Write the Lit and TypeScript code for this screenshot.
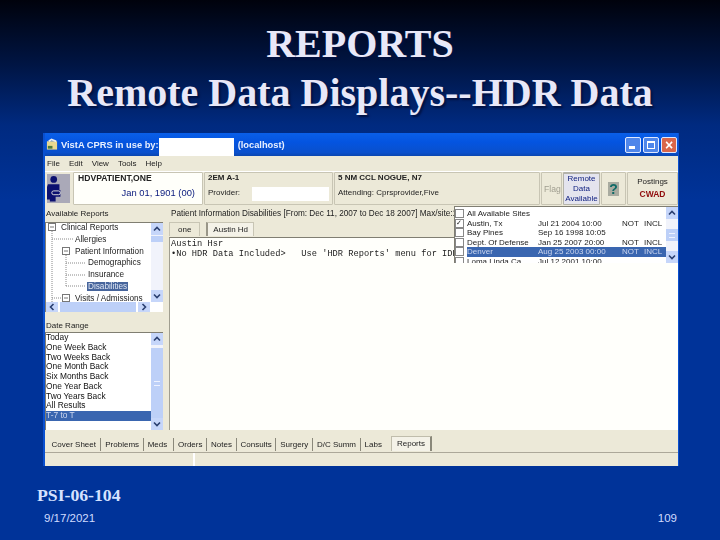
import { LitElement, html, css } from 'lit';
import { customElement } from 'lit/decorators.js';

const TREE = [
  { label: 'Clinical Reports', x: 14 },
  { label: 'Allergies', x: 28 },
  { label: 'Patient Information', x: 28 },
  { label: 'Demographics', x: 41 },
  { label: 'Insurance', x: 41 },
  { label: 'Disabilities', x: 41, sel: true },
  { label: 'Visits / Admissions', x: 28 },
];

const RANGES = ['Today', 'One Week Back', 'Two Weeks Back', 'One Month Back', 'Six Months Back', 'One Year Back', 'Two Years Back', 'All Results', 'T-7 to T'];

const SITES = [
  { name: 'All Available Sites', date: '', a: '', b: '' },
  { name: 'Austin, Tx', date: 'Jul 21 2004 10:00', a: 'NOT', b: 'INCL', on: true },
  { name: 'Bay Pines', date: 'Sep 16 1998 10:05', a: '', b: '' },
  { name: 'Dept. Of Defense', date: 'Jan 25 2007 20:00', a: 'NOT', b: 'INCL' },
  { name: 'Denver', date: 'Aug 25 2003 00:00', a: 'NOT', b: 'INCL', sel: true },
  { name: 'Loma Linda Ca', date: 'Jul 12 2001 10:00', a: '', b: '' },
];

const TABS = ['Cover Sheet', 'Problems', 'Meds', 'Orders', 'Notes', 'Consults', 'Surgery', 'D/C Summ', 'Labs'];

const UP = html`<svg width="12" height="12" viewBox="0 0 12 12"><path d="M3 7.5l3-3 3 3" fill="none" stroke="#2a3f70" stroke-width="1.6" /></svg>`;
const DOWN = html`<svg width="12" height="12" viewBox="0 0 12 12"><path d="M3 4.5l3 3 3-3" fill="none" stroke="#2a3f70" stroke-width="1.6" /></svg>`;
const LEFT = html`<svg width="12" height="10" viewBox="0 0 12 10"><path d="M7.5 2l-3 3 3 3" fill="none" stroke="#2a3f70" stroke-width="1.6" /></svg>`;
const RIGHT = html`<svg width="12" height="10" viewBox="0 0 12 10"><path d="M4.5 2l3 3-3 3" fill="none" stroke="#2a3f70" stroke-width="1.6" /></svg>`;

@customElement('app-root')
export class AppRoot extends LitElement {
  static styles = css`
    :host {
      display: flex;
      flex-direction: column;
      width: 720px;
      height: 540px;
      overflow: hidden;
      background: linear-gradient(#00020c 0, #001544 65px, #002a80 125px, #003399 200px, #003399 100%);
      font-family: "Liberation Sans", Arial, sans-serif;
    }
    h1 {
      margin: 0;
      padding-top: 19px;
      height: 114px;
      box-sizing: border-box;
      text-align: center;
      font: bold 40px/49px "Liberation Serif", serif;
      color: #e8e8f8;
      text-shadow: 2px 2px 2px #001040;
    }
    .win {
      position: relative;
      margin: 19px 41px 0 43px;
      height: 333px;
      display: flex;
      flex-direction: column;
      background: #ece9d8;
      border-left: 2px solid #0a50d0;
      border-right: 1px solid #0a50d0;
      font-size: 8px;
      color: #222;
      filter: blur(0.35px);
    }
    .title {
      height: 23px;
      flex: none;
      display: flex;
      align-items: center;
      background: linear-gradient(#0a5fe8, #0454e0 40%, #0a50cc 85%, #0a46b0);
      color: #e8f0ff;
      font-weight: bold;
      font-size: 9.3px;
    }
    .title svg { margin: 0 3px 0 1px; }
    .blank { width: 75px; height: 18px; background: #fff; margin: 5px 4px 0 0; align-self: flex-start; }
    .btns { margin-left: auto; display: flex; gap: 2px; padding-right: 1px; }
    .btn {
      width: 16px;
      height: 16px;
      box-sizing: border-box;
      border: 1px solid #dfe8ff;
      border-radius: 2px;
      background: #4f86ea;
      position: relative;
    }
    .btn.min::after { content: ''; position: absolute; left: 3px; bottom: 3px; width: 6px; height: 3px; background: #fff; }
    .btn.max::after { content: ''; position: absolute; inset: 3px; border: 1px solid #fff; border-top-width: 2px; }
    .btn.close { background: #d9664a; color: #fff; font: bold 14px/14px "Liberation Sans", sans-serif; text-align: center; }
    .menu {
      height: 16px;
      flex: none;
      display: flex;
      gap: 9px;
      align-items: center;
      padding-left: 2px;
      border-bottom: 1px solid #fff;
      box-sizing: border-box;
    }
    .head {
      height: 33px;
      flex: none;
      display: grid;
      grid-template-columns: 27px 130px 129px 206px 21px 37px 25px 51px;
      gap: 1px;
      box-sizing: border-box;
    }
    .cell {
      border: 1px solid #c8c5b4;
      border-radius: 1px;
      padding: 0 3px;
      line-height: 10px;
      min-width: 0;
      overflow: hidden;
      white-space: nowrap;
    }
    .l2 { margin-top: 5px; display: flex; }
    .strong { font-weight: bold; }
    .pic { background: #aaa9b8; border: 2px solid #ece9d8; padding: 0; }
    .pt { background: #fffffa; font-weight: bold; font-size: 8.6px; padding-left: 4px; }
    .pt .l2 { display: block; font-weight: normal; color: #102080; font-size: 9.4px; text-align: right; padding-right: 4px; }
    .prov { display: block; width: 82px; height: 14px; background: #fff; margin: -1px 0 0 12px; }
    .flag { color: #a09e90; display: flex; align-items: center; padding: 0 0 0 2px; font-size: 8.6px; }
    .remote { background: #e4e4ee; color: #102080; text-align: center; padding: 0; line-height: 9.8px; white-space: normal; border: 1px solid #b4b3aa; border-top-width: 2px; }
    .help { display: flex; align-items: center; justify-content: center; padding: 0; }
    .help b { background: #a9aba0; color: #0f6a66; font: bold 14px/14px "Liberation Sans", sans-serif; width: 11px; text-align: center; }
    .post { text-align: center; padding-top: 2px; line-height: 13px; }
    .post b { color: #900c0c; display: block; font-size: 8.5px; }
    .body { flex: 1; display: flex; min-height: 0; }
    .left { width: 124px; flex: none; display: flex; flex-direction: column; }
    .lbl { height: 13px; line-height: 13px; padding-left: 1px; flex: none; margin-top: 2px; }
    .box {
      position: relative;
      display: flex;
      width: 118px;
      background: #fff;
      border-top: 1px solid #807e72;
      border-left: 1px solid #807e72;
      box-sizing: border-box;
      overflow: hidden;
    }
    .tree { height: 90px; margin-top: 2px; flex-wrap: wrap; }
    .rows { flex: 1; min-width: 0; overflow: hidden; height: 79px; box-sizing: border-box; }
    .rows .node:first-child { margin-top: -1px; }
    .node { height: 11.8px; line-height: 11px; white-space: nowrap; font-size: 8.2px; }
    .node span { padding: 0 1px; }
    .node .sel { background: #47659c; color: #dfe6f4; }
    .lines { position: absolute; left: 0; top: 0; pointer-events: none; }
    .sb { width: 12px; flex: none; display: flex; flex-direction: column; background: #f1f3fb; }
    .sb u { display: block; flex: none; height: 12px; background: #c6d6fa; }
    .sb svg, .hb svg { display: block; }
    .sb s { display: block; position: relative; background: #bdd0f8; margin: auto 0; height: 12px; }
    .sb s::after { content: ''; position: absolute; left: 3px; right: 3px; top: 50%; height: 3px; margin-top: -2px; border-top: 1px solid #eef2ff; border-bottom: 1px solid #eef2ff; }
    .sb.tr s { margin: 1px 0 auto; height: 6px; }
    .sb.tr s::after { display: none; }
    .sb.full s { margin: 3px 0 0; flex: 1; height: auto; }
    .hb { width: 100%; height: 10px; display: flex; padding-right: 13px; box-sizing: border-box; }
    .hb u { display: block; width: 12px; height: 10px; background: #c6d6fa; flex: none; }
    .hb s { display: block; flex: 1; margin: 0 2px; background: #bdd0f8; }
    .range { height: 98px; }
    .items { flex: 1; min-width: 0; }
    .item { height: 9.75px; line-height: 9.75px; font-size: 8.4px; white-space: nowrap; color: #111; }
    .item.sel { background: #3a66b0; color: #ccd6ee; }
    .right { flex: 1; min-width: 0; display: flex; flex-direction: column; }
    .rlbl { height: 14px; line-height: 14px; margin-top: 2px; padding-left: 2px; white-space: nowrap; flex: none; font-size: 8.2px; overflow: hidden; }
    .stabs { height: 16px; flex: none; display: flex; gap: 6px; }
    .stab { padding: 0 8px; border: 1px solid #c8c5b4; border-bottom: 0; line-height: 13px; height: 13px; margin-top: 1px; }
    .stab.on { padding: 0 5px; border-left: 2px solid #999688; background: #f4f2e8; }
    .memo {
      flex: 1;
      background: #fffffb;
      border-top: 1px solid #807e72;
      border-left: 1px solid #a09e90;
      font: 8.7px/10px "Liberation Mono", monospace;
      padding: 1px 1px;
      white-space: pre;
      overflow: hidden;
      margin-bottom: 6px;
      color: #222;
    }
    .sites {
      position: absolute;
      left: 409px;
      top: 73px;
      width: 224px;
      height: 57px;
      background: #fff;
      border: 1px solid #807e72;
      border-right: 0;
      border-bottom: 0;
      box-sizing: border-box;
      display: flex;
      overflow: hidden;
    }
    .slist { flex: 1; min-width: 0; padding-top: 2px; }
    .site { display: grid; grid-template-columns: 12px 71px 84px 22px 1fr; height: 9.5px; line-height: 9.5px; white-space: nowrap; font-size: 8px; overflow: hidden; }
    .site i { display: block; width: 9px; height: 9px; border: 1px solid #888; box-sizing: border-box; background: #fff; font: bold 7px/7px "DejaVu Sans", sans-serif; color: #222; }
    .site.sel span { background: #3a66b0; color: #ccd6ee; }
    .tabs { height: 15px; flex: none; display: flex; padding-left: 2px; align-items: flex-end; }
    .tab { height: 13px; line-height: 13px; padding: 0 3.8px; border-right: 1px solid #8a887a; white-space: nowrap; font-size: 8px; }
    .tab:first-child { padding: 0 4.5px; }
    .tab:nth-child(3) { padding-right: 6px; }
    .tab:nth-child(9) { border-right: 0; padding-right: 0; }
    .tab.on { margin-left: 9px; padding: 0 5px; background: #f4f2e8; border: 1px solid #c0bdac; border-right: 2px solid #8a887a; border-bottom: 0; height: 14px; }
    .status { height: 14px; flex: none; display: flex; border-top: 1px solid #aca899; box-sizing: border-box; margin-top: 1px; }
    .status div { width: 148px; border-right: 2px solid #fff; }
    footer {
      flex: 1;
      display: flex;
      flex-direction: column;
      padding: 20px 43px 0 37px;
    }
    .code { font: bold 17.7px/18px "Liberation Serif", serif; color: #d6e2ff; }
    .meta { display: flex; justify-content: space-between; padding: 7px 0 0 7px; font-size: 11.5px; line-height: 14px; color: #d0dcff; }
  `;

  private sb(cls = '') {
    return html`<div class="sb ${cls}"><u>${UP}</u><s></s><u>${DOWN}</u></div>`;
  }

  render() {
    return html`
      <h1>REPORTS<br />Remote Data Displays--HDR Data</h1>
      <div class="win">
        <div class="title">
          <svg width="12" height="13" viewBox="0 0 13 13"><rect x="1" y="3" width="11" height="9" fill="#e8d890" /><path d="M3 3l3-2 5 2" fill="none" stroke="#eee" stroke-width="2" /><rect x="2" y="8" width="5" height="3" fill="#4a7a40" /></svg>
          VistA CPRS in use by:<span class="blank"></span>(localhost)
          <div class="btns">
            <div class="btn min"></div>
            <div class="btn max"></div>
            <div class="btn close">×</div>
          </div>
        </div>
        <div class="menu"><span>File</span><span>Edit</span><span>View</span><span>Tools</span><span>Help</span></div>
        <div class="head">
          <div class="cell pic">
            <svg width="23" height="29" viewBox="0 0 24 29">
              <circle cx="7" cy="5" r="3.5" fill="#0c1070" />
              <path d="M1 10h12v6h1v7H9v5H3v-2H0V13z" fill="#0c1070" />
              <rect x="5" y="17" width="9" height="4" rx="2" fill="#0c1070" stroke="#ddd" />
            </svg>
          </div>
          <div class="cell pt">HDVPATIENT,ONE<div class="l2">Jan 01, 1901 (00)</div></div>
          <div class="cell"><span class="strong">2EM A-1</span><div class="l2">Provider:<i class="prov"></i></div></div>
          <div class="cell"><span class="strong">5 NM CCL NOGUE, N7</span><div class="l2">Attending: Cprsprovider,Five</div></div>
          <div class="cell flag">Flag</div>
          <div class="cell remote">Remote Data Available</div>
          <div class="cell help"><b>?</b></div>
          <div class="cell post">Postings<b>CWAD</b></div>
        </div>
        <div class="body">
          <div class="left">
            <div class="lbl">Available Reports</div>
            <div class="box tree">
              <div class="rows">
                ${TREE.map(n => html`<div class="node" style="padding-left:${n.x}px"><span class=${n.sel ? 'sel' : ''}>${n.label}</span></div>`)}
              </div>
              ${this.sb('tr')}
              <div class="hb"><u>${LEFT}</u><s></s><u>${RIGHT}</u></div>
              <svg class="lines" width="60" height="79" viewBox="0 0 60 79" fill="none" stroke="#888" stroke-dasharray="1 1">
                <path d="M6 4V79M6 16H28M20 28V63M20 40H40M20 52H40M20 63H40M6 75H24" />
                <g stroke-dasharray="none" fill="#fff" stroke="#777"><rect x="2.5" y="0.5" width="7" height="7" /><rect x="16.5" y="24.5" width="7" height="7" /><rect x="16.5" y="71.5" width="7" height="7" /><path d="M4 4h4M18 28h4M18 75h4" /></g>
              </svg>
            </div>
            <div class="lbl" style="margin-top:7px">Date Range</div>
            <div class="box range">
              <div class="items">
                ${RANGES.map((r, i) => html`<div class="item ${i === 8 ? 'sel' : ''}">${r}</div>`)}
              </div>
              ${this.sb('full')}
            </div>
          </div>
          <div class="right">
            <div class="rlbl">Patient Information Disabilities [From: Dec 11, 2007 to Dec 18 2007] Max/site:100</div>
            <div class="stabs"><div class="stab">one</div><div class="stab on">Austin Hd</div></div>
            <div class="memo">Austin Hsr
•No HDR Data Included&gt;   Use 'HDR Reports' menu for IDH</div>
          </div>
        </div>
        <div class="sites">
          <div class="slist">
            ${SITES.map(s => html`<div class="site ${s.sel ? 'sel' : ''}"><i>${s.on ? '✓' : ''}</i><span>${s.name}</span><span>${s.date}</span><span>${s.a}</span><span>${s.b}</span></div>`)}
          </div>
          ${this.sb()}
        </div>
        <div class="tabs">
          ${TABS.map(t => html`<div class="tab">${t}</div>`)}
          <div class="tab on">Reports</div>
        </div>
        <div class="status"><div></div></div>
      </div>
      <footer>
        <div class="code">PSI-06-104</div>
        <div class="meta"><span>9/17/2021</span><span>109</span></div>
      </footer>
    `;
  }
}
